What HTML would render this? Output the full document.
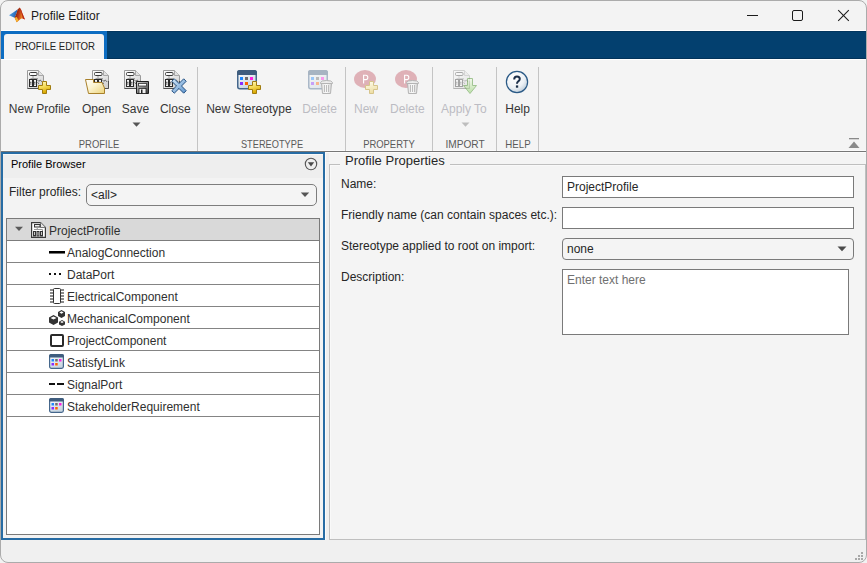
<!DOCTYPE html>
<html><head><meta charset="utf-8">
<style>
*{box-sizing:border-box;margin:0;padding:0}
html,body{width:867px;height:563px;overflow:hidden;background:#f2f2f2;font-family:"Liberation Sans",sans-serif}
.a{position:absolute}
.t{position:absolute;white-space:nowrap;font-size:12px;line-height:14px;color:#262626}
.c{text-align:center}
.sec{top:137px;font-size:11px;color:#5a5a5a}
#win{position:absolute;left:0;top:0;width:867px;height:563px;background:#f3f3f3;overflow:hidden}
#frame{position:absolute;left:0;top:0;width:867px;height:563px;border:1px solid #ababab;border-radius:8px;box-shadow:0 0 0 12px #f2f2f2}
</style></head><body>
<div id="win">
<!-- title bar -->
<svg class="a" style="left:0;top:0" width="30" height="30" viewBox="0 0 30 30">
<defs><linearGradient id="lg1" x1="0" y1="0.3" x2="1" y2="0.7"><stop offset="0" stop-color="#6a1208"/><stop offset="0.45" stop-color="#c2401a"/><stop offset="0.75" stop-color="#ee8a22"/><stop offset="1" stop-color="#d0401a"/></linearGradient>
<linearGradient id="lg2" x1="0" y1="0" x2="1" y2="0.3"><stop offset="0" stop-color="#5fb0f0"/><stop offset="1" stop-color="#1f5fb0"/></linearGradient></defs>
<path d="M9 15.3L13.2 12.4L17.8 9.2L16.4 13.6L14.6 17.8Z" fill="url(#lg2)"/>
<path d="M19.7 7.6Q21 8.8 22 12.2L24.9 19.5Q22.8 18.3 20.9 18.7L16.6 22.2Q15.6 19.4 14.6 17.8L16.4 13.6L17.8 9.2Z" fill="url(#lg1)"/>
<path d="M14.6 17.8Q15.6 19.4 16.6 22.2L18.8 20.4Q17.5 19 16.8 17Z" fill="#f6b12c"/>
<path d="M20.2 8.3Q21.3 9.8 22.1 12.6L24.9 19.5L22.9 18.6Z" fill="#b8261a"/>
</svg>
<div class="t" style="left:31px;top:9px;color:#1b1b1b">Profile Editor</div>
<div class="a" style="left:747px;top:15px;width:11px;height:1px;background:#1b1b1b"></div>
<div class="a" style="left:792px;top:10px;width:11px;height:11px;border:1px solid #1b1b1b;border-radius:2px"></div>
<svg class="a" style="left:837px;top:9px" width="13" height="13" viewBox="0 0 13 13"><path d="M1.2 1.2L11.8 11.8M11.8 1.2L1.2 11.8" stroke="#1b1b1b" stroke-width="1.05"/></svg>
<!-- white line + navy bar -->
<div class="a" style="left:0;top:30px;width:867px;height:1px;background:#ffffff"></div>
<div class="a" style="left:0;top:31px;width:867px;height:28px;background:#03406f"></div>
<div class="a" style="left:0;top:31px;width:867px;height:1px;background:#02365f"></div>
<div class="a" style="left:0;top:58px;width:867px;height:1px;background:#02335a"></div>
<!-- tab -->
<div class="a" style="left:1px;top:31px;width:106px;height:28px;background:#0d6dc2"></div>
<div class="a" style="left:4px;top:34px;width:100px;height:25px;background:#f4f4f4;border-radius:3px 3px 0 0"></div>
<div class="t" style="left:14.6px;top:39px;font-size:11px;color:#222;transform:scaleX(0.875);transform-origin:0 0">PROFILE EDITOR</div>
<!-- toolstrip -->
<div class="a" style="left:0;top:59px;width:867px;height:1px;background:#ffffff"></div>
<div class="a" style="left:0;top:60px;width:867px;height:91px;background:#f4f4f4"></div>
<div class="a" style="left:0;top:150px;width:867px;height:1px;background:#fafafa"></div>
<div class="a" style="left:0;top:151px;width:867px;height:1px;background:#777"></div>
<div class="a" style="left:197px;top:67px;width:1px;height:84px;background:#c4c4c4"></div>
<div class="a" style="left:345px;top:67px;width:1px;height:84px;background:#c4c4c4"></div>
<div class="a" style="left:432px;top:67px;width:1px;height:84px;background:#c4c4c4"></div>
<div class="a" style="left:496px;top:67px;width:1px;height:84px;background:#c4c4c4"></div>
<div class="a" style="left:538px;top:67px;width:1px;height:84px;background:#c4c4c4"></div>
<svg class="a" style="left:27px;top:70px;opacity:1" width="18" height="20" viewBox="0 0 18 20">
<defs><linearGradient id="dg1" x1="0" y1="0" x2="0.6" y2="1"><stop offset="0" stop-color="#ffffff"/><stop offset="1" stop-color="#d2d2d2"/></linearGradient></defs>
<path d="M0.5 0.5H11.5L16.5 5.5V18.5H0.5Z" fill="url(#dg1)" stroke="#9a9a9a"/>
<path d="M0.5 18.5H16.5V11" fill="none" stroke="#505050"/>
<path d="M11.5 0.5V5.5H16.5" fill="#e2e2e2" stroke="#a8a8a8"/>
<rect x="2.5" y="2.5" width="7.5" height="3" rx="1" fill="#fafafa" stroke="#3a3a3a"/>
<path d="M6 6V8.5M3.5 8.5H11" stroke="#a0a0a0" fill="none"/>
<rect x="2.5" y="9.5" width="3" height="7" fill="#f4f4f4" stroke="#2a2a2a"/>
<rect x="6.5" y="9.5" width="3" height="7" fill="#f4f4f4" stroke="#2a2a2a"/>
<path d="M3 12.3H4.5M3 14H4.5M7 12.3H8.5M7 14H8.5" stroke="#2a2a2a" stroke-width="0.8" fill="none"/>
<path d="M10 9.5l1.8 1.8l1.5-1.2l1.8 1.8M10.5 12.5l1.5 1.2" stroke="#555" stroke-width="0.9" fill="none"/>
</svg><svg class="a" style="left:38px;top:81px;opacity:1" width="14" height="14" viewBox="0 0 14 14">
<defs><linearGradient id="pg1" x1="0" y1="0" x2="0.3" y2="1"><stop offset="0" stop-color="#fffbd0"/><stop offset="0.5" stop-color="#f5dc5a"/><stop offset="1" stop-color="#d9a800"/></linearGradient></defs>
<path d="M4.5 0.5H8.5V4.5H12.5V8.5H8.5V12.5H4.5V8.5H0.5V4.5H4.5Z" fill="url(#pg1)" stroke="#a07c10"/>
</svg><svg class="a" style="left:92px;top:70px;opacity:1" width="18" height="20" viewBox="0 0 18 20">
<defs><linearGradient id="dg2" x1="0" y1="0" x2="0.6" y2="1"><stop offset="0" stop-color="#ffffff"/><stop offset="1" stop-color="#d2d2d2"/></linearGradient></defs>
<path d="M0.5 0.5H11.5L16.5 5.5V18.5H0.5Z" fill="url(#dg2)" stroke="#9a9a9a"/>
<path d="M0.5 18.5H16.5V11" fill="none" stroke="#505050"/>
<path d="M11.5 0.5V5.5H16.5" fill="#e2e2e2" stroke="#a8a8a8"/>
<rect x="2.5" y="2.5" width="7.5" height="3" rx="1" fill="#fafafa" stroke="#3a3a3a"/>
<path d="M6 6V8.5M3.5 8.5H11" stroke="#a0a0a0" fill="none"/>
<rect x="2.5" y="9.5" width="3" height="7" fill="#f4f4f4" stroke="#2a2a2a"/>
<rect x="6.5" y="9.5" width="3" height="7" fill="#f4f4f4" stroke="#2a2a2a"/>
<path d="M3 12.3H4.5M3 14H4.5M7 12.3H8.5M7 14H8.5" stroke="#2a2a2a" stroke-width="0.8" fill="none"/>
<path d="M10 9.5l1.8 1.8l1.5-1.2l1.8 1.8M10.5 12.5l1.5 1.2" stroke="#555" stroke-width="0.9" fill="none"/>
</svg><svg class="a" style="left:85px;top:79px" width="21" height="15" viewBox="0 0 21 15">
<defs><linearGradient id="fg" x1="0" y1="0" x2="1" y2="1"><stop offset="0" stop-color="#ffffff"/><stop offset="0.45" stop-color="#fbf3cf"/><stop offset="1" stop-color="#ecd37a"/></linearGradient></defs>
<path d="M0.5 0.5H8.5V3.5H17L19.5 9V14.5H3.5Z" fill="url(#fg)" stroke="#a8802a"/>
</svg><svg class="a" style="left:124px;top:70px;opacity:1" width="18" height="20" viewBox="0 0 18 20">
<defs><linearGradient id="dg3" x1="0" y1="0" x2="0.6" y2="1"><stop offset="0" stop-color="#ffffff"/><stop offset="1" stop-color="#d2d2d2"/></linearGradient></defs>
<path d="M0.5 0.5H11.5L16.5 5.5V18.5H0.5Z" fill="url(#dg3)" stroke="#9a9a9a"/>
<path d="M0.5 18.5H16.5V11" fill="none" stroke="#505050"/>
<path d="M11.5 0.5V5.5H16.5" fill="#e2e2e2" stroke="#a8a8a8"/>
<rect x="2.5" y="2.5" width="7.5" height="3" rx="1" fill="#fafafa" stroke="#3a3a3a"/>
<path d="M6 6V8.5M3.5 8.5H11" stroke="#a0a0a0" fill="none"/>
<rect x="2.5" y="9.5" width="3" height="7" fill="#f4f4f4" stroke="#2a2a2a"/>
<rect x="6.5" y="9.5" width="3" height="7" fill="#f4f4f4" stroke="#2a2a2a"/>
<path d="M3 12.3H4.5M3 14H4.5M7 12.3H8.5M7 14H8.5" stroke="#2a2a2a" stroke-width="0.8" fill="none"/>
<path d="M10 9.5l1.8 1.8l1.5-1.2l1.8 1.8M10.5 12.5l1.5 1.2" stroke="#555" stroke-width="0.9" fill="none"/>
</svg><svg class="a" style="left:136px;top:81px" width="13" height="13" viewBox="0 0 13 13">
<defs><linearGradient id="flg" x1="0" y1="0" x2="1" y2="1"><stop offset="0" stop-color="#d8d8d8"/><stop offset="1" stop-color="#3a3a3a"/></linearGradient></defs>
<path d="M0.5 0.5H12.5V12.5H0.5Z" fill="url(#flg)" stroke="#1e1e1e"/>
<rect x="2.5" y="2.5" width="8" height="2.5" fill="#fff" stroke="#333" stroke-width="0.8"/>
<rect x="3" y="7.5" width="7" height="5" fill="#f0f0f0" stroke="#222" stroke-width="0.8"/>
<rect x="5" y="8.5" width="1.5" height="4" fill="#222"/>
</svg><svg class="a" style="left:163px;top:70px;opacity:1" width="18" height="20" viewBox="0 0 18 20">
<defs><linearGradient id="dg4" x1="0" y1="0" x2="0.6" y2="1"><stop offset="0" stop-color="#ffffff"/><stop offset="1" stop-color="#d2d2d2"/></linearGradient></defs>
<path d="M0.5 0.5H11.5L16.5 5.5V18.5H0.5Z" fill="url(#dg4)" stroke="#9a9a9a"/>
<path d="M0.5 18.5H16.5V11" fill="none" stroke="#505050"/>
<path d="M11.5 0.5V5.5H16.5" fill="#e2e2e2" stroke="#a8a8a8"/>
<rect x="2.5" y="2.5" width="7.5" height="3" rx="1" fill="#fafafa" stroke="#3a3a3a"/>
<path d="M6 6V8.5M3.5 8.5H11" stroke="#a0a0a0" fill="none"/>
<rect x="2.5" y="9.5" width="3" height="7" fill="#f4f4f4" stroke="#2a2a2a"/>
<rect x="6.5" y="9.5" width="3" height="7" fill="#f4f4f4" stroke="#2a2a2a"/>
<path d="M3 12.3H4.5M3 14H4.5M7 12.3H8.5M7 14H8.5" stroke="#2a2a2a" stroke-width="0.8" fill="none"/>
<path d="M10 9.5l1.8 1.8l1.5-1.2l1.8 1.8M10.5 12.5l1.5 1.2" stroke="#555" stroke-width="0.9" fill="none"/>
</svg><svg class="a" style="left:171px;top:78px" width="16" height="16" viewBox="0 0 16 16">
<defs><linearGradient id="xg" x1="0" y1="0" x2="1" y2="1"><stop offset="0" stop-color="#d6e9f8"/><stop offset="1" stop-color="#5a92cc"/></linearGradient></defs>
<path d="M0.8 3.3L3.3 0.8L8 5.5L12.7 0.8L15.2 3.3L10.5 8L15.2 12.7L12.7 15.2L8 10.5L3.3 15.2L0.8 12.7L5.5 8Z" fill="url(#xg)" stroke="#234f80"/>
</svg><svg class="a" style="left:237px;top:70px;opacity:1" width="20" height="20" viewBox="0 0 20 20">
<defs><linearGradient id="sg1" x1="0" y1="0" x2="0.4" y2="1"><stop offset="0" stop-color="#ffffff"/><stop offset="1" stop-color="#c9d6e2"/></linearGradient></defs>
<rect x="0.75" y="0.75" width="18.5" height="18" rx="2" fill="url(#sg1)" stroke="#45678c" stroke-width="1.5"/>
<path d="M0 2.5Q0 0 2.5 0H17.5Q20 0 20 2.5V5H0Z" fill="#3f5d7e"/>
<rect x="3" y="7" width="3" height="3" fill="#1e88ff"/>
<rect x="8" y="7" width="3" height="3" fill="#6e6e6e"/>
<rect x="13" y="7" width="3" height="3" fill="#ff20e0"/>
<rect x="3" y="12" width="3" height="3" fill="#8a2cff"/>
<rect x="8" y="12" width="3" height="3" fill="#ff6200"/>
</svg><svg class="a" style="left:248px;top:81px;opacity:1" width="14" height="14" viewBox="0 0 14 14">
<defs><linearGradient id="pg2" x1="0" y1="0" x2="0.3" y2="1"><stop offset="0" stop-color="#fffbd0"/><stop offset="0.5" stop-color="#f5dc5a"/><stop offset="1" stop-color="#d9a800"/></linearGradient></defs>
<path d="M4.5 0.5H8.5V4.5H12.5V8.5H8.5V12.5H4.5V8.5H0.5V4.5H4.5Z" fill="url(#pg2)" stroke="#a07c10"/>
</svg><svg class="a" style="left:308px;top:70px;opacity:0.42" width="20" height="20" viewBox="0 0 20 20">
<defs><linearGradient id="sg2" x1="0" y1="0" x2="0.4" y2="1"><stop offset="0" stop-color="#ffffff"/><stop offset="1" stop-color="#c9d6e2"/></linearGradient></defs>
<rect x="0.75" y="0.75" width="18.5" height="18" rx="2" fill="url(#sg2)" stroke="#45678c" stroke-width="1.5"/>
<path d="M0 2.5Q0 0 2.5 0H17.5Q20 0 20 2.5V5H0Z" fill="#3f5d7e"/>
<rect x="3" y="7" width="3" height="3" fill="#1e88ff"/>
<rect x="8" y="7" width="3" height="3" fill="#6e6e6e"/>
<rect x="13" y="7" width="3" height="3" fill="#ff20e0"/>
<rect x="3" y="12" width="3" height="3" fill="#8a2cff"/>
<rect x="8" y="12" width="3" height="3" fill="#ff6200"/>
</svg><svg class="a" style="left:320px;top:80px" width="13" height="14" viewBox="0 0 13 14">
<defs><linearGradient id="tgd320" x1="0" y1="0" x2="1" y2="0"><stop offset="0" stop-color="#e2e2e2"/><stop offset="0.5" stop-color="#fbfbfb"/><stop offset="1" stop-color="#d4d4d4"/></linearGradient></defs>
<path d="M0.5 2.5Q1 0.5 6.5 0.5Q12 0.5 12.5 2.5V3.5H0.5Z" fill="#ececec" stroke="#b4b4b4"/>
<path d="M1.5 3.5H11.5L10.5 13.5H2.5Z" fill="url(#tgd320)" stroke="#b4b4b4"/>
<path d="M4.5 5V12M6.5 5V12M8.5 5V12" stroke="#bdbdbd"/>
</svg><svg class="a" style="left:354px;top:70px" width="23" height="19" viewBox="0 0 23 19">
<ellipse cx="11" cy="9" rx="11" ry="9" fill="#dfb1b7"/>
<path d="M9.6 13.5V5.2H11.8Q13.8 5.2 13.8 7.4Q13.8 9.6 11.8 9.6H9.6" fill="none" stroke="#fff" stroke-width="1.1"/>
</svg><svg class="a" style="left:365px;top:81px" width="14" height="14" viewBox="0 0 14 14">
<defs><linearGradient id="pgd" x1="0" y1="0" x2="0.3" y2="1"><stop offset="0" stop-color="#fffdf0"/><stop offset="1" stop-color="#eedfa6"/></linearGradient></defs>
<path d="M4.5 0.5H8.5V4.5H12.5V8.5H8.5V12.5H4.5V8.5H0.5V4.5H4.5Z" fill="url(#pgd)" stroke="#d6c48c"/>
</svg><svg class="a" style="left:395px;top:70px" width="23" height="19" viewBox="0 0 23 19">
<ellipse cx="11" cy="9" rx="11" ry="9" fill="#dfb1b7"/>
<path d="M9.6 13.5V5.2H11.8Q13.8 5.2 13.8 7.4Q13.8 9.6 11.8 9.6H9.6" fill="none" stroke="#fff" stroke-width="1.1"/>
</svg><svg class="a" style="left:406px;top:80px" width="13" height="14" viewBox="0 0 13 14">
<defs><linearGradient id="tgd406" x1="0" y1="0" x2="1" y2="0"><stop offset="0" stop-color="#e2e2e2"/><stop offset="0.5" stop-color="#fbfbfb"/><stop offset="1" stop-color="#d4d4d4"/></linearGradient></defs>
<path d="M0.5 2.5Q1 0.5 6.5 0.5Q12 0.5 12.5 2.5V3.5H0.5Z" fill="#ececec" stroke="#b4b4b4"/>
<path d="M1.5 3.5H11.5L10.5 13.5H2.5Z" fill="url(#tgd406)" stroke="#b4b4b4"/>
<path d="M4.5 5V12M6.5 5V12M8.5 5V12" stroke="#bdbdbd"/>
</svg><svg class="a" style="left:453px;top:70px;opacity:0.4" width="18" height="20" viewBox="0 0 18 20">
<defs><linearGradient id="dg5" x1="0" y1="0" x2="0.6" y2="1"><stop offset="0" stop-color="#ffffff"/><stop offset="1" stop-color="#d2d2d2"/></linearGradient></defs>
<path d="M0.5 0.5H11.5L16.5 5.5V18.5H0.5Z" fill="url(#dg5)" stroke="#9a9a9a"/>
<path d="M0.5 18.5H16.5V11" fill="none" stroke="#505050"/>
<path d="M11.5 0.5V5.5H16.5" fill="#e2e2e2" stroke="#a8a8a8"/>
<rect x="2.5" y="2.5" width="7.5" height="3" rx="1" fill="#fafafa" stroke="#3a3a3a"/>
<path d="M6 6V8.5M3.5 8.5H11" stroke="#a0a0a0" fill="none"/>
<rect x="2.5" y="9.5" width="3" height="7" fill="#f4f4f4" stroke="#2a2a2a"/>
<rect x="6.5" y="9.5" width="3" height="7" fill="#f4f4f4" stroke="#2a2a2a"/>
<path d="M3 12.3H4.5M3 14H4.5M7 12.3H8.5M7 14H8.5" stroke="#2a2a2a" stroke-width="0.8" fill="none"/>
<path d="M10 9.5l1.8 1.8l1.5-1.2l1.8 1.8M10.5 12.5l1.5 1.2" stroke="#555" stroke-width="0.9" fill="none"/>
</svg><svg class="a" style="left:463px;top:78px;opacity:.55" width="15" height="17" viewBox="0 0 15 17">
<defs><linearGradient id="ag" x1="0" y1="0" x2="0" y2="1"><stop offset="0" stop-color="#f2fbe8"/><stop offset="1" stop-color="#8fd06a"/></linearGradient></defs>
<path d="M4.5 0.5H9.5V7.5H13.5L7 15.5L0.5 7.5H4.5Z" fill="url(#ag)" stroke="#5f9e45"/>
</svg><svg class="a" style="left:505px;top:70px" width="24" height="24" viewBox="0 0 24 24">
<defs><radialGradient id="hg" cx="0.38" cy="0.3" r="0.85"><stop offset="0" stop-color="#ffffff"/><stop offset="0.55" stop-color="#eef2f6"/><stop offset="1" stop-color="#a9bccd"/></radialGradient></defs>
<circle cx="12" cy="12" r="10.6" fill="url(#hg)" stroke="#2b5a86" stroke-width="1.2"/>
<path d="M9.2 9.4Q9.2 6.6 12 6.6Q14.8 6.6 14.8 9.1Q14.8 10.6 13.1 11.5Q12 12.2 12 13.8" fill="none" stroke="#1c2f4a" stroke-width="2"/>
<rect x="10.9" y="15.4" width="2.3" height="2.3" fill="#1c2f4a"/>
</svg>
<div class="t c" style="left:-20.5px;top:102px;width:120px;color:#363636;">New Profile</div>
<div class="t c" style="left:36.6px;top:102px;width:120px;color:#363636;">Open</div>
<div class="t c" style="left:75.5px;top:102px;width:120px;color:#363636;">Save</div>
<div class="t c" style="left:115.3px;top:102px;width:120px;color:#363636;">Close</div>
<div class="t c" style="left:188.9px;top:102px;width:120px;color:#363636;">New Stereotype</div>
<div class="t c" style="left:259.5px;top:102px;width:120px;color:#bcbcc3;">Delete</div>
<div class="t c" style="left:306.0px;top:102px;width:120px;color:#bcbcc3;">New</div>
<div class="t c" style="left:347.4px;top:102px;width:120px;color:#bcbcc3;">Delete</div>
<div class="t c" style="left:403.9px;top:102px;width:120px;color:#bcbcc3;">Apply To</div>
<div class="t c" style="left:457.6px;top:102px;width:120px;color:#363636;">Help</div>

<svg class="a" style="left:132px;top:122px" width="9" height="6" viewBox="0 0 9 6"><path d="M0.5 0.5H8.5L4.5 4.8Z" fill="#555"/></svg>
<svg class="a" style="left:461px;top:122px" width="9" height="6" viewBox="0 0 9 6"><path d="M0.5 0.5H8.5L4.5 4.8Z" fill="#bdbdbd"/></svg>
<div class="t c sec" style="left:39.4px;width:120px;transform:scaleX(0.86)">PROFILE</div>
<div class="t c sec" style="left:211.6px;width:120px;transform:scaleX(0.84)">STEREOTYPE</div>
<div class="t c sec" style="left:328.8px;width:120px;transform:scaleX(0.857)">PROPERTY</div>
<div class="t c sec" style="left:404.7px;width:120px;transform:scaleX(0.92)">IMPORT</div>
<div class="t c sec" style="left:457.5px;width:120px;transform:scaleX(0.88)">HELP</div>

<svg class="a" style="left:848px;top:138px" width="12" height="11" viewBox="0 0 12 11"><rect x="1" y="0" width="10" height="1.3" fill="#8a8a8a"/><path d="M0.5 10H11.5L6 3.5Z" fill="#8a8a8a"/></svg>

<!-- left panel -->
<div class="a" style="left:1px;top:152px;width:324px;height:388px;border:2px solid #276ca4;background:#f3f3f3"></div>
<div class="a" style="left:3px;top:154px;width:320px;height:1px;background:#f8f8f8"></div>
<div class="a" style="left:3px;top:155px;width:320px;height:23px;background:#eeeeee"></div>
<div class="t" style="left:11px;top:157px;font-size:11px;color:#000">Profile Browser</div>
<svg class="a" style="left:304px;top:157px" width="14" height="14" viewBox="0 0 14 14"><circle cx="7" cy="7" r="5.7" fill="none" stroke="#555" stroke-width="1.1"/><path d="M3.8 5.2H10.2L7 9.6Z" fill="#4a4a4a"/></svg>
<div class="t" style="left:9px;top:185px">Filter profiles:</div>
<div class="a" style="left:86px;top:184px;width:231px;height:22px;border:1px solid #7d7d7d;border-radius:5px;background:#f4f4f4"></div>
<div class="t" style="left:91px;top:188px">&lt;all&gt;</div>
<svg class="a" style="left:300px;top:192px" width="10" height="6" viewBox="0 0 10 6"><path d="M0.8 0.6H9.2L5 4.9Z" fill="#555"/></svg>
<!-- tree -->
<div class="a" style="left:6px;top:218px;width:314px;height:317px;border:1px solid #7a7a7a;background:#fff"></div>
<div class="a" style="left:7px;top:219px;width:312px;height:21px;background:#d9d9d9"></div>
<div class="a" style="left:7px;top:240px;width:312px;height:1px;background:#7c7c7c"></div>
<svg class="a" style="left:15px;top:226px" width="9" height="6" viewBox="0 0 9 6"><path d="M0 0.8H8L4 5Z" fill="#5a5a5a"/></svg>
<svg class="a" style="left:31px;top:222px" width="15" height="16" viewBox="0 0 15 16">
<path d="M0.6 0.6H9.5L14.4 5.5V15.4H0.6Z" fill="#fff" stroke="#3a3a3a" stroke-width="1.2"/>
<path d="M9.5 0.6V5.5H14.4" fill="#e6e6e6" stroke="#777"/>
<rect x="3.5" y="2.5" width="5.5" height="2.5" fill="#eee" stroke="#333"/>
<path d="M6.25 5V7.5M3 7.5H11.5V9" stroke="#999" fill="none"/>
<rect x="2.5" y="9.5" width="2" height="4.5" fill="#c8c8c8" stroke="#333"/><rect x="6" y="9.5" width="2" height="4.5" fill="#c8c8c8" stroke="#333"/><rect x="9.5" y="9.5" width="2" height="4.5" fill="#c8c8c8" stroke="#333"/>
</svg>
<div class="t" style="left:49px;top:224px;color:#303030">ProjectProfile</div>
<div class="a" style="left:7px;top:262px;width:312px;height:1px;background:#848484"></div>
<div class="a" style="left:49px;top:251px;width:16px;height:2px;background:#000"></div><div class="a" style="left:49px;top:253px;width:16px;height:1px;background:#777"></div>
<div class="t" style="left:67px;top:246px;color:#303030">AnalogConnection</div>
<div class="a" style="left:7px;top:284px;width:312px;height:1px;background:#848484"></div>
<div class="a" style="left:49px;top:273px;width:2px;height:2px;background:#111"></div><div class="a" style="left:54px;top:273px;width:2px;height:2px;background:#111"></div><div class="a" style="left:59px;top:273px;width:2px;height:2px;background:#111"></div>
<div class="t" style="left:67px;top:268px;color:#303030">DataPort</div>
<div class="a" style="left:7px;top:306px;width:312px;height:1px;background:#848484"></div>
<div class="a" style="left:50px;top:289px;width:14px;height:1.6px;background:#8a8a8a"></div><div class="a" style="left:50px;top:292px;width:14px;height:1.6px;background:#8a8a8a"></div><div class="a" style="left:50px;top:295px;width:14px;height:1.6px;background:#8a8a8a"></div><div class="a" style="left:50px;top:298px;width:14px;height:1.6px;background:#8a8a8a"></div><div class="a" style="left:50px;top:301px;width:14px;height:1.6px;background:#8a8a8a"></div><div class="a" style="left:53px;top:288px;width:8px;height:16px;border:1.5px solid #333;border-radius:1.5px;background:#fff"></div>
<div class="t" style="left:67px;top:290px;color:#303030">ElectricalComponent</div>
<div class="a" style="left:7px;top:328px;width:312px;height:1px;background:#848484"></div>
<svg class="a" style="left:48px;top:309px" width="18" height="17" viewBox="0 0 18 17">
<path d="M5.5 6L10 8.5V13.5L5.5 16L1 13.5V8.5Z" fill="#333"/><path d="M5.5 7.5L8.5 9L5.5 10.5L2.5 9Z" fill="#fff"/>
<path d="M13.5 1L17 3V7L13.5 9L10 7V3Z" fill="#333"/><path d="M13.5 2.3L15.6 3.5L13.5 4.7L11.4 3.5Z" fill="#fff"/>
<path d="M14 11L17 12.7V15.5L14 17L11 15.5V12.7Z" fill="#333"/><path d="M14 12L15.8 13L14 14L12.2 13Z" fill="#fff"/>
</svg>
<div class="t" style="left:67px;top:312px;color:#303030">MechanicalComponent</div>
<div class="a" style="left:7px;top:350px;width:312px;height:1px;background:#848484"></div>
<div class="a" style="left:50px;top:334px;width:14px;height:13px;border:2px solid #2a2a2a;border-radius:2px;background:#fff"></div>
<div class="t" style="left:67px;top:334px;color:#303030">ProjectComponent</div>
<div class="a" style="left:7px;top:372px;width:312px;height:1px;background:#848484"></div>
<svg class="a" style="left:49px;top:354px" width="15" height="15" viewBox="0 0 15 15">
<defs><linearGradient id="tsg351" x1="0" y1="0" x2="0.4" y2="1"><stop offset="0" stop-color="#ffffff"/><stop offset="1" stop-color="#c9d6e2"/></linearGradient></defs>
<rect x="0.6" y="0.6" width="13.8" height="13.8" rx="1.8" fill="url(#tsg351)" stroke="#45678c" stroke-width="1.2"/>
<path d="M0 2Q0 0 2 0H13Q15 0 15 2V3.5H0Z" fill="#3f5d7e"/>
<rect x="2.5" y="5" width="2.5" height="2.5" fill="#1e88ff"/><rect x="6.2" y="5" width="2.5" height="2.5" fill="#6e6e6e"/><rect x="10" y="5" width="2.5" height="2.5" fill="#ff20e0"/>
<rect x="2.5" y="9" width="2.5" height="2.5" fill="#8a2cff"/><rect x="6.2" y="9" width="2.5" height="2.5" fill="#ff6200"/>
</svg>
<div class="t" style="left:67px;top:356px;color:#303030">SatisfyLink</div>
<div class="a" style="left:7px;top:394px;width:312px;height:1px;background:#848484"></div>
<div class="a" style="left:49px;top:383px;width:6px;height:2px;background:#111"></div><div class="a" style="left:57px;top:383px;width:7px;height:2px;background:#111"></div>
<div class="t" style="left:67px;top:378px;color:#303030">SignalPort</div>
<div class="a" style="left:7px;top:416px;width:312px;height:1px;background:#848484"></div>
<svg class="a" style="left:49px;top:398px" width="15" height="15" viewBox="0 0 15 15">
<defs><linearGradient id="tsg395" x1="0" y1="0" x2="0.4" y2="1"><stop offset="0" stop-color="#ffffff"/><stop offset="1" stop-color="#c9d6e2"/></linearGradient></defs>
<rect x="0.6" y="0.6" width="13.8" height="13.8" rx="1.8" fill="url(#tsg395)" stroke="#45678c" stroke-width="1.2"/>
<path d="M0 2Q0 0 2 0H13Q15 0 15 2V3.5H0Z" fill="#3f5d7e"/>
<rect x="2.5" y="5" width="2.5" height="2.5" fill="#1e88ff"/><rect x="6.2" y="5" width="2.5" height="2.5" fill="#6e6e6e"/><rect x="10" y="5" width="2.5" height="2.5" fill="#ff20e0"/>
<rect x="2.5" y="9" width="2.5" height="2.5" fill="#8a2cff"/><rect x="6.2" y="9" width="2.5" height="2.5" fill="#ff6200"/>
</svg>
<div class="t" style="left:67px;top:400px;color:#303030">StakeholderRequirement</div>


<!-- right panel -->
<div class="a" style="left:325px;top:152px;width:542px;height:388px;background:#f4f4f4"></div>
<div class="a" style="left:325px;top:152px;width:542px;height:1px;background:#fbfbfb"></div>
<div class="a" style="left:325px;top:152px;width:1px;height:388px;background:#fbfbfb"></div>
<div class="a" style="left:326px;top:153px;width:3px;height:387px;background:#efefef"></div>
<div class="a" style="left:329px;top:164px;width:537px;height:376px;border:1px solid #bfbfbf"></div>
<div class="a" style="left:330px;top:165px;width:535px;height:374px;border-left:1px solid #f9f9f9;border-top:1px solid #f9f9f9"></div>
<div class="a" style="left:340px;top:155px;width:110px;height:14px;background:#f4f4f4"></div>
<div class="t" style="left:345px;top:153px;font-size:13px;line-height:15px;color:#262626">Profile Properties</div>
<div class="t" style="left:341px;top:177px">Name:</div>
<div class="t" style="left:341px;top:208px">Friendly name (can contain spaces etc.):</div>
<div class="t" style="left:341px;top:239px">Stereotype applied to root on import:</div>
<div class="t" style="left:341px;top:270px">Description:</div>
<div class="a" style="left:562px;top:176px;width:292px;height:22px;border:1px solid #7a7a7a;background:#fff"></div>
<div class="t" style="left:567px;top:180px">ProjectProfile</div>
<div class="a" style="left:562px;top:207px;width:292px;height:22px;border:1px solid #7a7a7a;background:#fff"></div>
<div class="a" style="left:562px;top:238px;width:292px;height:22px;border:1px solid #7a7a7a;border-radius:4px;background:#f4f4f4"></div>
<div class="t" style="left:567px;top:242px">none</div>
<svg class="a" style="left:837px;top:246px" width="10" height="6" viewBox="0 0 10 6"><path d="M0.5 0.5H9.5L5 5.2Z" fill="#4a4a4a"/></svg>
<div class="a" style="left:562px;top:269px;width:287px;height:66px;border:1px solid #7a7a7a;background:#fff"></div>
<div class="t" style="left:567px;top:273px;color:#707070">Enter text here</div>

<!-- status bar -->
<div class="a" style="left:0;top:540px;width:867px;height:23px;background:#f0f0f0"></div>
<div class="a" style="left:861px;top:552px;width:2px;height:2px;background:#a8a8a8"></div>
<div class="a" style="left:858px;top:555px;width:2px;height:2px;background:#a8a8a8"></div>
<div class="a" style="left:861px;top:555px;width:2px;height:2px;background:#a8a8a8"></div>
<div class="a" style="left:855px;top:558px;width:2px;height:2px;background:#a8a8a8"></div>
<div class="a" style="left:858px;top:558px;width:2px;height:2px;background:#a8a8a8"></div>
<div class="a" style="left:861px;top:558px;width:2px;height:2px;background:#a8a8a8"></div>
<div id="frame"></div>
</div>
</body></html>
